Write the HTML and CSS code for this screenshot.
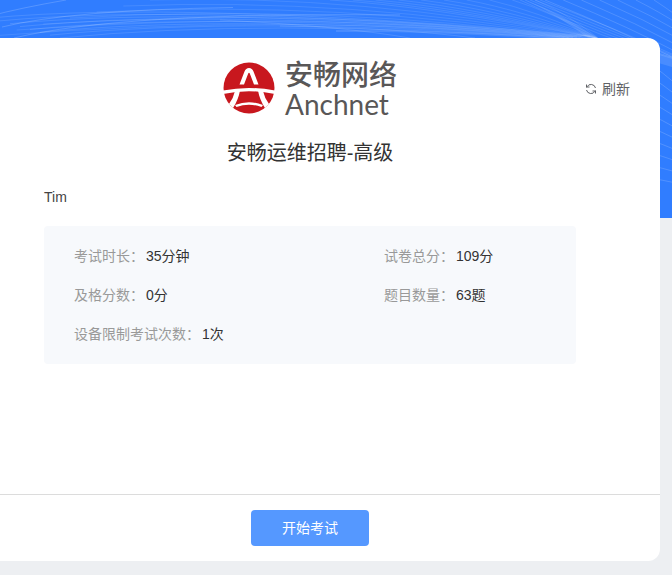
FILE: index.html
```html
<!DOCTYPE html>
<html lang="zh-CN">
<head>
<meta charset="utf-8">
<meta name="viewport" content="width=device-width, initial-scale=1">
<title>安畅运维招聘-高级</title>
<link rel="stylesheet" href="styles.css">
</head>
<body>
<svg class="waves" viewBox="0 0 672 218" preserveAspectRatio="xMaxYMin slice" aria-hidden="true">
  <g id="wave-lines" fill="none" stroke="#fff"></g>
  <path d="M525 0Q562 14 598 38H588Q556 14 525 0Z" fill="#fff" opacity=".12"/>
  <path d="M336 30Q450 29 560 38H530Q430 31 336 32Z" fill="#fff" opacity=".12"/>
  <path d="M655 52L672 57V67L655 62Z" fill="#fff" opacity=".12"/>
</svg>
<main class="card">
  <div class="content">
    <header class="head">
      <div class="brand">
        <svg class="emblem" viewBox="0 0 52 52" aria-hidden="true">
          <circle cx="26" cy="26" r="25.5" fill="#c8171e"/>
          <path d="M16.500 22.500L21.500 9.500Q22.800 6 26 6T30.500 9.500L35.500 22.500H31L26.800 11.500Q26 9.800 25.200 11.500L21 22.500Z" fill="#fff"/>
          <path d="M0 28.500Q26 23.500 52 28.500V32Q26 26.500 0 32Z" fill="#fff"/>
          <path d="M12 29L17 28.500Q15.500 37.500 10 46L6 42Q10.500 36 12 29ZM40 29L35 28.500Q36.500 37.500 42 46L46 42Q41.500 36 40 29Z" fill="#fff"/>
          <path d="M12 43Q26 37.500 40 43L38.500 45Q26 40.500 13.500 45Z" fill="#fff"/>
        </svg>
        <div class="wordmark">
          <span class="wordmark-cn">安畅网络</span>
          <span class="wordmark-en">Anchnet</span>
        </div>
      </div>
      <button class="refresh" type="button">
        <svg class="refresh-icon" viewBox="0 0 12 12" aria-hidden="true">
          <path d="M1.500 4.500V1.500M1.500 4H4.500M2 3.800A4.600 4.600 0 0 1 10.500 5M10.500 7.500V10.500M10.500 8H7.500M10 8.200A4.600 4.600 0 0 1 1.500 7" fill="none" stroke="#606266"/>
        </svg>
        刷新
      </button>
    </header>
    <h1 class="title">安畅运维招聘-高级</h1>
    <p class="user">Tim</p>
    <dl class="info">
      <div class="item"><dt>考试时长：</dt><dd>35分钟</dd></div>
      <div class="item"><dt>试卷总分：</dt><dd>109分</dd></div>
      <div class="item"><dt>及格分数：</dt><dd>0分</dd></div>
      <div class="item"><dt>题目数量：</dt><dd>63题</dd></div>
      <div class="item"><dt>设备限制考试次数：</dt><dd>1次</dd></div>
    </dl>
  </div>
  <footer class="actions">
    <button class="start" type="button">开始考试</button>
  </footer>
</main>
<script src="waves.js"></script>
</body>
</html>
```
FILE: waves.js
```javascript
// Each family blends from one quadratic curve to another: [x0, y0, cx, cy, x1, y1].
const families = [
  { from: [-10, 16, 20, 8, 66, 0], to: [14, 38, 120, 12, 400, 15], count: 3, opacity: 0.18 },
  { from: [-10, 18, 180, 0, 590, 36], to: [60, 38, 260, 18, 560, 38], count: 8, opacity: 0.12 },
  { from: [150, 0, 360, -6, 590, 38], to: [-10, 36, 300, 12, 570, 38], count: 7, opacity: 0.1 },
  { from: [330, 0, 430, 6, 595, 38], to: [535, 0, 565, 12, 598, 38], count: 10, opacity: 0.11 },
  { from: [280, 26, 400, 28, 475, 38], to: [220, 20, 340, 26, 410, 38], count: 2, opacity: 0.13 },
  { from: [545, 0, 620, 30, 690, 66], to: [654, 0, 665, 7, 680, 18], count: 7, opacity: 0.15 },
  { from: [520, 0, 600, 38, 690, 64], to: [540, 0, 610, 26, 690, 62], count: 5, opacity: 0.12 },
  { from: [650, 64, 662, 72, 676, 84], to: [650, 178, 662, 180, 676, 183], count: 10, opacity: 0.16 }
];

const group = document.getElementById("wave-lines");
families.forEach(({ from, to, count, opacity }) => {
  for (let i = 0; i < count; i++) {
    const t = i / (count - 1);
    const p = from.map((v, k) => v + (to[k] - v) * t);
    const path = document.createElementNS("http://www.w3.org/2000/svg", "path");
    path.setAttribute("d", `M${p[0]} ${p[1]}Q${p[2]} ${p[3]} ${p[4]} ${p[5]}`);
    path.setAttribute("opacity", opacity);
    group.appendChild(path);
  }
});
```
FILE: styles.css
```css
* {
  box-sizing: border-box;
}

body {
  margin: 0;
  min-height: 100vh;
  padding: 38px 12px 14px 0;
  background: #edeff2;
  color: #333;
  font: 14px/20px "Liberation Sans", "Noto Sans CJK SC", sans-serif;
}

.waves {
  position: absolute;
  top: 0;
  left: 0;
  width: 100%;
  height: 218px;
  background: #307dff;
}

.card {
  position: relative;
  display: flex;
  flex-direction: column;
  min-height: calc(100vh - 52px);
  background: #fff;
  border-radius: 0 12px 12px 0;
}

.content {
  flex: 1;
  padding: 22px 84px 40px 44px;
}

.head {
  position: relative;
  display: flex;
  justify-content: center;
}

.brand {
  display: flex;
  align-items: center;
  gap: 10px;
  height: 56px;
}

.emblem {
  width: 52px;
  height: 52px;
}

.wordmark {
  display: flex;
  flex-direction: column;
  padding-top: 4px;
  color: #595757;
}

.wordmark-cn {
  font-size: 28px;
  font-weight: 500;
  line-height: 28px;
}

.wordmark-en {
  font-family: Lato, sans-serif;
  font-size: 28px;
  line-height: 28px;
}

button {
  border: 0;
  font: inherit;
  cursor: pointer;
}

.refresh {
  position: absolute;
  top: 19px;
  right: -54px;
  display: flex;
  align-items: center;
  gap: 5px;
  padding: 0;
  background: none;
  color: #606266;
}

.refresh-icon {
  width: 12px;
  height: 12px;
}

.title {
  margin: 22px 0 0;
  font-size: 20px;
  font-weight: 400;
  line-height: 30px;
  text-align: center;
}

.user {
  margin: 19px 0;
  color: #444;
}

.info {
  display: grid;
  grid-template-columns: 310fr 162fr;
  gap: 19px 0;
  margin: 0;
  padding: 20px 30px;
  background: #f7f9fc;
  border-radius: 4px;
}

.item {
  display: flex;
  white-space: nowrap;
}

dt {
  color: #999;
}

dd {
  margin: 0 0 0 2px;
}

.actions {
  display: flex;
  justify-content: center;
  padding: 15px 40px 15px 0;
  border-top: 1px solid #dcdcdc;
}

.start {
  width: 118px;
  height: 36px;
  background: #5598ff;
  border-radius: 4px;
  color: #fff;
}
```
